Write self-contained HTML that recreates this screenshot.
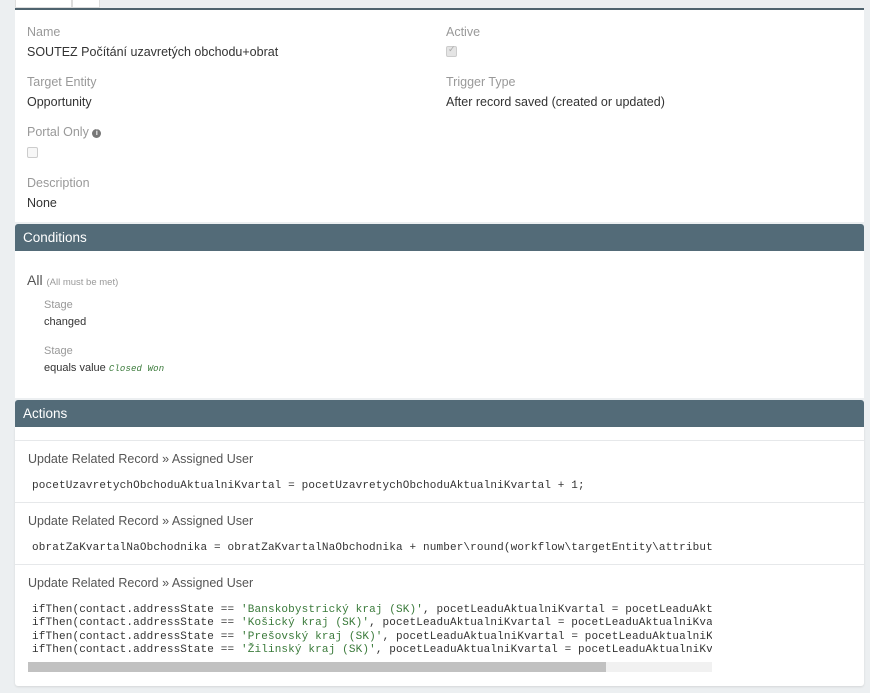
<!DOCTYPE html>
<html><head><meta charset="utf-8"><style>
*{margin:0;padding:0;box-sizing:border-box}
body{width:870px;height:693px;background:#eceff1;font-family:"Liberation Sans",sans-serif;font-size:12px;color:#333;position:relative;overflow:hidden}
.a{position:absolute;white-space:nowrap}
.lbl{color:#999;font-size:12.5px}
.val{color:#333;font-size:12.5px}
.panel{position:absolute;left:15px;width:849px;background:#fff}
.hdr{position:absolute;left:15px;width:849px;height:27px;background:#536b78;color:#fff;font-size:13.5px;padding:6px 0 0 8px;border-radius:3px 3px 0 0}
.code{font-family:"Liberation Mono",monospace;font-size:11px;color:#333;letter-spacing:0.14px}
.g{color:#3a7a3a}
.cb{position:absolute;width:11px;height:11px;border:1px solid #ccc;border-radius:2px;background:#f7f7f7}
.sep{position:absolute;left:15px;width:849px;height:1px;background:#e6e8ea}
</style></head><body>
<div class="a" style="left:15px;top:0;width:57px;height:8px;background:#fff;border:1px solid #ddd;border-top:none"></div>
<div class="a" style="left:72px;top:0;width:28px;height:8px;background:#fff;border:1px solid #ddd;border-top:none"></div>
<div class="a" style="left:15px;top:8px;width:849px;height:2px;background:#4f636e"></div>
<div class="panel" style="top:10px;height:212px"></div>
<div class="a lbl" style="left:27px;top:25px">Name</div>
<div class="a val" style="left:27px;top:45px">SOUTEZ Počítání uzavretých obchodu+obrat</div>
<div class="a lbl" style="left:446px;top:25px">Active</div>
<div class="cb" style="left:446px;top:46px;background:#e4e4e4"></div>
<div class="a" style="left:448px;top:44px;font-size:9px;color:#aaa">✓</div>
<div class="a lbl" style="left:27px;top:75px">Target Entity</div>
<div class="a val" style="left:27px;top:95px">Opportunity</div>
<div class="a lbl" style="left:446px;top:75px">Trigger Type</div>
<div class="a val" style="left:446px;top:95px">After record saved (created or updated)</div>
<div class="a lbl" style="left:27px;top:125px">Portal Only <span style="display:inline-block;width:9px;height:9px;border-radius:50%;background:#777;color:#fff;font-size:7px;text-align:center;line-height:9px;font-weight:bold;vertical-align:1px">i</span></div>
<div class="cb" style="left:27px;top:147px"></div>
<div class="a lbl" style="left:27px;top:176px">Description</div>
<div class="a val" style="left:27px;top:196px">None</div>

<div class="hdr" style="top:224px">Conditions</div>
<div class="panel" style="top:251px;height:147px"></div>
<div class="a" style="left:27px;top:272px;font-size:14px;color:#555">All <span style="font-size:9.5px;color:#999">(All must be met)</span></div>
<div class="a" style="left:44px;top:299px;font-size:11px;color:#999">Stage</div>
<div class="a" style="left:44px;top:316px;font-size:11px">changed</div>
<div class="a" style="left:44px;top:345px;font-size:11px;color:#999">Stage</div>
<div class="a" style="left:44px;top:362px;font-size:11px">equals value <span class="code g" style="font-size:9px;font-style:italic">Closed Won</span></div>

<div class="hdr" style="top:400px">Actions</div>
<div class="panel" style="top:427px;height:259px;border-radius:0 0 3px 3px;box-shadow:0 1px 2px rgba(0,0,0,.1)"></div>
<div class="sep" style="top:440px"></div>
<div class="sep" style="top:502px"></div>
<div class="sep" style="top:564px"></div>
<div class="a" style="left:28px;top:452px;font-size:12.5px;color:#555">Update Related Record » Assigned User</div>
<div class="a code" style="left:32px;top:480px">pocetUzavretychObchoduAktualniKvartal = pocetUzavretychObchoduAktualniKvartal + 1;</div>
<div class="a" style="left:28px;top:514px;font-size:12.5px;color:#555">Update Related Record » Assigned User</div>
<div class="a code" style="left:32px;top:542px">obratZaKvartalNaObchodnika = obratZaKvartalNaObchodnika + number\round(workflow\targetEntity\attribut</div>
<div class="a" style="left:28px;top:576px;font-size:12.5px;color:#555">Update Related Record » Assigned User</div>
<div class="a" style="left:28px;top:602px;width:684px;height:70px;overflow:hidden">
<div class="code" style="position:absolute;left:4px;top:2px;line-height:13.3px;white-space:pre">ifThen(contact.addressState == <span class="g">'Banskobystrický kraj (SK)'</span>, pocetLeaduAktualniKvartal = pocetLeaduAkt
ifThen(contact.addressState == <span class="g">'Košický kraj (SK)'</span>, pocetLeaduAktualniKvartal = pocetLeaduAktualniKva
ifThen(contact.addressState == <span class="g">'Prešovský kraj (SK)'</span>, pocetLeaduAktualniKvartal = pocetLeaduAktualniK
ifThen(contact.addressState == <span class="g">'Žilinský kraj (SK)'</span>, pocetLeaduAktualniKvartal = pocetLeaduAktualniKv</div>
<div style="position:absolute;left:0;top:60px;width:684px;height:10px;background:#f1f1f1"></div>
<div style="position:absolute;left:0;top:60px;width:578px;height:10px;background:#c1c1c1"></div>
</div>
</body></html>
